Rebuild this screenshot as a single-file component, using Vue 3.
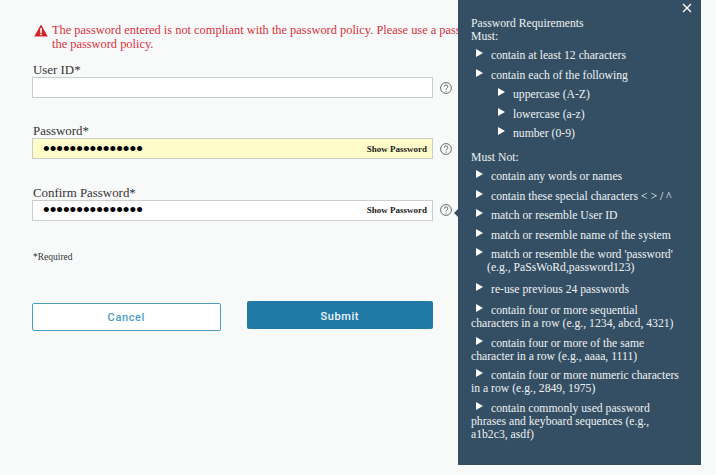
<template>
    <div class="page">
        <form class="form" @submit.prevent>
            <div class="error">
                <svg class="error-icon" viewBox="0 0 14 13" width="14" height="13">
                    <path d="M7 0.5 L13.8 12.6 H0.2 Z" fill="#d3232a" />
                    <rect x="6.2" y="4.2" width="1.6" height="4.6" fill="#fff" />
                    <rect x="6.2" y="9.6" width="1.6" height="1.6" fill="#fff" />
                </svg>
                <p class="error-text">
                    The password entered is not compliant with the password policy. Please use a password that meets<br />the password policy.
                </p>
            </div>

            <div v-for="field in fields" :key="field.label" class="field" :class="field.cls">
                <label class="label">{{ field.label }}</label>
                <div class="row">
                    <div class="input-box" :class="{ filled: field.highlight }">
                        <input class="input" :type="field.value ? 'password' : 'text'" :value="field.value" />
                        <span v-if="field.value" class="show">Show Password</span>
                    </div>
                    <svg class="help" viewBox="0 0 12 12" width="12" height="12">
                        <circle cx="6" cy="6" r="5.4" fill="none" stroke="#5c5c5c" stroke-width="0.9" />
                        <path d="M4.3 4.7 A1.75 1.75 0 1 1 6.9 6.2 C6.2 6.6 6 6.9 6 7.6" fill="none" stroke="#5c5c5c" stroke-width="0.9" />
                        <circle cx="6" cy="9.1" r="0.6" fill="#5c5c5c" />
                    </svg>
                </div>
            </div>

            <p class="required">*Required</p>

            <div class="actions">
                <button type="button" class="btn cancel">Cancel</button>
                <button type="submit" class="btn submit">Submit</button>
            </div>
        </form>

        <aside class="panel">
            <span class="pointer"></span>
            <svg class="close" viewBox="0 0 10 10" width="10" height="10">
                <path d="M1 1 L9 9 M9 1 L1 9" stroke="#fff" stroke-width="1.3" fill="none" />
            </svg>
            <div class="heading">Password Requirements</div>
            <div class="heading">Must:</div>
            <ul class="list must">
                <li><i class="arrow"></i>contain at least 12 characters</li>
                <li><i class="arrow"></i>contain each of the following</li>
                <li v-for="sub in subItems" :key="sub" class="sub"><i class="arrow"></i>{{ sub }}</li>
            </ul>
            <div class="heading not">Must Not:</div>
            <ul class="list">
                <li v-for="item in shortItems" :key="item"><i class="arrow"></i>{{ item }}</li>
                <li class="hang"><i class="arrow"></i>match or resemble the word 'password'<br />(e.g., PaSsWoRd,password123)</li>
                <li class="spaced"><i class="arrow"></i>re-use previous 24 passwords</li>
                <li v-for="item in longItems" :key="item" class="long"><i class="arrow"></i><span v-html="item"></span></li>
            </ul>
        </aside>
    </div>
</template>

<script setup>
    const dots = 'aaaaaaaaaaaaaaa';

    const fields = [
        { label: 'User ID*', value: '', cls: 'first' },
        { label: 'Password*', value: dots, highlight: true },
        { label: 'Confirm Password*', value: dots, cls: 'last' }
    ];

    const subItems = ['uppercase (A-Z)', 'lowercase (a-z)', 'number (0-9)'];

    const shortItems = [
        'contain any words or names',
        'contain these special characters < > / ^',
        'match or resemble User ID',
        'match or resemble name of the system'
    ];

    const longItems = [
        'contain four or more sequential<br>characters in a row (e.g., 1234, abcd, 4321)',
        'contain four or more of the same<br>character in a row (e.g., aaaa, 1111)',
        'contain four or more numeric characters<br>in a row (e.g., 2849, 1975)',
        'contain commonly used password<br>phrases and keyboard sequences (e.g.,<br>a1b2c3, asdf)'
    ];
</script>

<style>
    html,
    body {
        margin: 0;
        background: #f8fafa;
    }
</style>

<style scoped>
    .page {
        position: relative;
        width: 716px;
        height: 475px;
        overflow: hidden;
        background: #f8fafa;
        font-family: "Liberation Serif", "DejaVu Serif", serif;
    }

    .form {
        width: 433px;
        padding: 24px 0 0 32px;
        box-sizing: border-box;
    }

    /* the panel covers the end of the first line, so the message stops at its edge */
    .error {
        display: flex;
        gap: 5px;
        width: 426px;
        overflow: hidden;
    }

    .error-icon {
        flex: none;
        transform: translateX(2px);
        margin-right: 1px;
    }

    .error-text {
        margin: -1px 0 0;
        white-space: nowrap;
        color: #d9303a;
        font-size: 12.4px;
        line-height: 14px;
    }

    .field {
        margin-top: 24.3px;
    }

    .field.first {
        margin-top: 10px;
    }

    .label {
        display: block;
        height: 16px;
        padding-left: 1px;
        color: #333;
        font-size: 12.9px;
        line-height: 18px;
    }

    .row {
        display: flex;
        align-items: center;
        width: 420px;
    }

    .input-box {
        display: flex;
        align-items: center;
        width: 401px;
        height: 21px;
        padding: 0 5px 0 10px;
        box-sizing: border-box;
        border: 1px solid #c8cdcd;
        background: #fff;
    }

    .input-box.filled {
        background: #fefcc8;
    }

    .input {
        flex: 1;
        min-width: 0;
        border: 0;
        padding: 0;
        outline: 0;
        background: transparent;
        color: #000;
        font-family: "Liberation Sans", sans-serif;
        font-size: 19px;
    }

    .show {
        flex: none;
        color: #222;
        font-size: 9px;
        font-weight: 700;
    }

    .help {
        flex: none;
        margin-left: 7px;
    }

    .required {
        margin: 30px 0 0 1px;
        color: #333;
        font-size: 9.5px;
        line-height: 12px;
    }

    .actions {
        display: flex;
        align-items: flex-start;
        gap: 26px;
        width: 401px;
        margin-top: 38px;
    }

    .btn {
        flex: 1;
        height: 28px;
        border-radius: 2px;
        font-family: Roboto, sans-serif;
        font-size: 11px;
        font-weight: 500;
        letter-spacing: 0.6px;
    }

    .cancel {
        margin-top: 2px;
        padding-top: 3px;
        border: 1px solid #4c9dc4;
        background: #fff;
        color: #4c9dc4;
    }

    .submit {
        padding-top: 4px;
        border: 0;
        background: #2179a6;
        color: #eef5f8;
    }

    .panel {
        position: absolute;
        top: 0;
        left: 458px;
        width: 243px;
        height: 465px;
        padding: 17px 10px 0 13px;
        box-sizing: border-box;
        background: #344f64;
        color: #eef1f3;
        font-size: 11.7px;
        line-height: 13px;
    }

    .pointer {
        position: absolute;
        top: 209px;
        left: -4px;
        width: 0;
        height: 0;
        border-top: 4px solid transparent;
        border-bottom: 4px solid transparent;
        border-right: 4px solid #344f64;
    }

    .close {
        position: absolute;
        top: 3px;
        right: 9px;
    }

    .list {
        margin: 0;
        padding: 0;
        list-style: none;
    }

    .list li {
        margin-top: 6.5px;
        padding-left: 5px;
    }

    .must li:first-child {
        margin-top: 6px;
    }

    .list .sub {
        padding-left: 27px;
    }

    .list .hang {
        padding-left: 16px;
        text-indent: -11px;
    }

    .list .spaced {
        margin-top: 8.5px;
    }

    .list .long {
        padding-left: 0;
        margin-top: 6.5px;
    }

    .list .spaced + .long {
        margin-top: 8.5px;
    }

    .arrow {
        display: inline-block;
        width: 0;
        height: 0;
        margin: 0 8px 2px 0;
        border-top: 4px solid transparent;
        border-bottom: 4px solid transparent;
        border-left: 7px solid #fff;
    }

    .long .arrow {
        margin-left: 5px;
    }

    .not {
        margin-top: 10.5px;
    }
</style>
